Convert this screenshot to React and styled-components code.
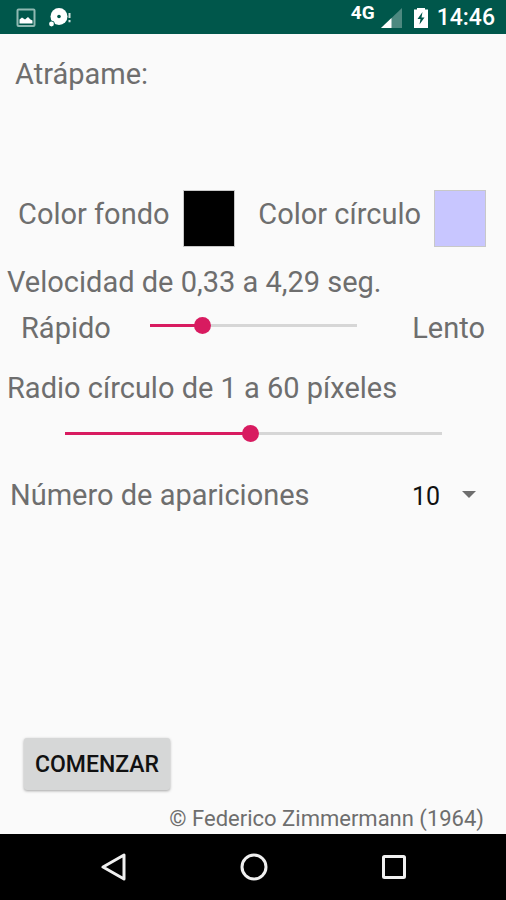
import { useState } from 'react';
import styled, { createGlobalStyle } from 'styled-components';

const accent = '#d81b60';
const textGrey = '#6e6e6e';
const trackGrey = '#d6d6d6';

export default function App() {
    const [speed, setSpeed] = useState(23);
    const [radius, setRadius] = useState(30);
    const [count, setCount] = useState('10');

    return (
        <StyledScreen>
            <GlobalStyle />
            <StatusBar />
            <StyledMain>
                <StyledTitle>Atrápame:</StyledTitle>
                <StyledColors>
                    <StyledColorField>
                        <span id="background-label">Color fondo</span>
                        <StyledSwatch type="button" $color="#000000" aria-labelledby="background-label" />
                    </StyledColorField>
                    <StyledColorField>
                        <span id="circle-label">Color círculo</span>
                        <StyledSwatch type="button" $color="#c8c6ff" aria-labelledby="circle-label" />
                    </StyledColorField>
                </StyledColors>
                <StyledLabel htmlFor="speed">Velocidad de 0,33 a 4,29 seg.</StyledLabel>
                <StyledSpeedRow>
                    <span>Rápido</span>
                    <Slider id="speed" min={0} max={100} value={speed} onChange={setSpeed} />
                    <span>Lento</span>
                </StyledSpeedRow>
                <StyledLabel htmlFor="radius">Radio círculo de 1 a 60 píxeles</StyledLabel>
                <StyledRadiusRow>
                    <Slider id="radius" min={1} max={60} value={radius} onChange={setRadius} />
                </StyledRadiusRow>
                <StyledCountRow>
                    <label htmlFor="count">Número de apariciones</label>
                    <StyledSpinner>
                        <select id="count" value={count} onChange={(e) => setCount(e.target.value)}>
                            <option>10</option>
                            <option>20</option>
                            <option>30</option>
                        </select>
                        <svg width="14" height="7" viewBox="0 0 14 7" aria-hidden="true">
                            <path d="M0 0h14L7 7z" fill="#6e6e6e" />
                        </svg>
                    </StyledSpinner>
                </StyledCountRow>
                <StyledStart type="button">COMENZAR</StyledStart>
                <StyledCredit>© Federico Zimmermann (1964)</StyledCredit>
            </StyledMain>
            <NavigationBar />
        </StyledScreen>
    )
}

function Slider({ id, min, max, value, onChange }) {
    const ratio = (value - min) / (max - min);

    return (
        <StyledRange
            id={id}
            type="range"
            min={min}
            max={max}
            value={value}
            onChange={(e) => onChange(Number(e.target.value))}
            style={{ '--ratio': ratio }}
        />
    )
}

function StatusBar() {
    return (
        <StyledStatusBar>
            <svg width="20" height="20" viewBox="0 0 20 20" aria-hidden="true">
                <rect x="1.5" y="1.5" width="17" height="16.5" rx="1" fill="none" stroke="#8fb9b2" strokeWidth="2" />
                <path d="M3.500 15.500v-4l2.500-2 3 2 3-2.500 2.500 2.500 2 1v3z" fill="#fff" />
            </svg>
            <svg width="24" height="20" viewBox="0 0 24 20" aria-hidden="true">
                <circle cx="11" cy="8.5" r="8.5" fill="#fff" />
                <circle cx="11" cy="8.5" r="1.8" fill="#00574b" />
                <circle cx="3.500" cy="16" r="3.2" fill="#00574b" />
                <circle cx="3.500" cy="16" r="2.4" fill="#fff" />
                <path d="M21.5 5v5M21.5 12v2.2" stroke="#d5e5e2" strokeWidth="2" />
            </svg>
            <StyledNetwork>4G</StyledNetwork>
            <svg width="21" height="20" viewBox="0 0 21 20" aria-hidden="true">
                <path d="M21 0v20H0z" fill="#4d8980" />
                <path d="M10.500 10v10H0z" fill="#fff" />
            </svg>
            <StyledBattery width="14" height="20" viewBox="0 0 14 20" aria-hidden="true">
                <path d="M3 0h8v1.500h3V20H0V1.500h3z" fill="#fff" />
                <path d="M8.500 4L3.500 11h3L5.500 16.500l5-7H7.500z" fill="#00574b" />
            </StyledBattery>
            <time>14:46</time>
        </StyledStatusBar>
    )
}

function NavigationBar() {
    return (
        <StyledNavigationBar>
            <button type="button" aria-label="Atrás">
                <svg width="28" height="28" viewBox="0 0 28 28">
                    <path d="M24 2v24L3 14z" />
                </svg>
            </button>
            <button type="button" aria-label="Inicio">
                <svg width="28" height="28" viewBox="0 0 28 28">
                    <circle cx="14" cy="14" r="12" />
                </svg>
            </button>
            <button type="button" aria-label="Recientes">
                <svg width="28" height="28" viewBox="0 0 28 28">
                    <rect x="3.500" y="3.500" width="21" height="21" rx="1" />
                </svg>
            </button>
        </StyledNavigationBar>
    )
}

const GlobalStyle = createGlobalStyle`
    * {
        box-sizing: border-box;
    }
    body {
        margin: 0;
        background: #fafafa;
        font-family: Roboto, "Liberation Sans", sans-serif;
    }
    button, select {
        font-family: inherit;
        cursor: pointer;
    }
`;

const StyledScreen = styled.div`
    display: flex;
    flex-direction: column;
    min-height: 100vh;
`;

const StyledStatusBar = styled.header`
    display: flex;
    align-items: center;
    height: 34px;
    padding: 2px 11px 0 16px;
    background: #00574b;
    color: white;
    svg + svg {
        margin-left: 12px;
    }
    time {
        margin-left: 9px;
        font-size: 23px;
        font-weight: 500;
        line-height: 32px;
    }
`;

const StyledNetwork = styled.span`
    margin-left: auto;
    margin-right: 6px;
    padding-bottom: 10px;
    font-size: 19px;
    font-weight: 700;
    line-height: 20px;
`;

const StyledBattery = styled.svg`
    flex: none;
`;

const StyledMain = styled.main`
    display: flex;
    flex-direction: column;
    flex: 1;
    padding: 23px 7px 0;
    color: ${textGrey};
    font-size: 29px;
    line-height: 34px;
`;

const StyledTitle = styled.h1`
    margin: 0;
    padding-left: 8px;
    font-size: 29px;
    font-weight: 400;
`;

const StyledColors = styled.div`
    display: flex;
    justify-content: space-between;
    margin-top: 99px;
    padding: 0 13px 0 11px;
`;

const StyledColorField = styled.div`
    display: flex;
    gap: 13px;
    span {
        padding-top: 7px;
    }
`;

const StyledSwatch = styled.button`
    width: 52px;
    height: 57px;
    padding: 0;
    border: 1px solid #c8c8c8;
    background: ${({ $color }) => $color};
`;

const StyledLabel = styled.label`
    margin-top: 18px;
`;

const StyledSpeedRow = styled.div`
    display: flex;
    margin: 12px 0 8px;
    padding: 0 14px;
    input {
        flex: 1;
        margin: 6px 55px 0 39px;
    }
`;

const StyledRadiusRow = styled.div`
    display: flex;
    margin-top: 20px;
    padding: 0 57px 0 58px;
    input {
        flex: 1;
    }
`;

const StyledRange = styled.input`
    appearance: none;
    min-width: 0;
    height: 17px;
    margin: 0;
    background: linear-gradient(${accent}, ${accent}) left center / calc(8px + (100% - 17px) * var(--ratio)) 3px no-repeat,
        linear-gradient(${trackGrey}, ${trackGrey}) center / 100% 3px no-repeat;
    cursor: pointer;
    &::-webkit-slider-thumb {
        appearance: none;
        width: 17px;
        height: 17px;
        border: none;
        border-radius: 50%;
        background: ${accent};
    }
    &::-moz-range-thumb {
        width: 17px;
        height: 17px;
        border: none;
        border-radius: 50%;
        background: ${accent};
    }
`;

const StyledCountRow = styled.div`
    display: flex;
    justify-content: space-between;
    margin-top: 36px;
    padding: 0 23px 0 3px;
`;

const StyledSpinner = styled.div`
    position: relative;
    select {
        appearance: none;
        width: 64px;
        height: 34px;
        padding: 0;
        border: none;
        background: none;
        color: #111111;
        font-size: 25px;
    }
    svg {
        position: absolute;
        top: 13px;
        right: 0;
        pointer-events: none;
    }
`;

const StyledStart = styled.button`
    align-self: flex-start;
    margin-top: auto;
    margin-left: 17px;
    padding: 0 11px;
    height: 52px;
    border: none;
    border-radius: 3px;
    background: #d6d7d7;
    box-shadow: 0 1px 3px rgba(0, 0, 0, 0.35);
    color: #111111;
    font-size: 23px;
    font-weight: 500;
`;

const StyledCredit = styled.footer`
    margin-top: 14px;
    padding-right: 15px;
    font-size: 22px;
    line-height: 30px;
    text-align: right;
`;

const StyledNavigationBar = styled.nav`
    display: flex;
    justify-content: center;
    gap: 112px;
    height: 66px;
    padding-left: 2px;
    background: black;
    button {
        display: flex;
        align-items: center;
        padding: 0;
        border: none;
        background: none;
    }
    svg {
        fill: none;
        stroke: #f0f0f0;
        stroke-width: 3;
        stroke-linejoin: round;
    }
`;
